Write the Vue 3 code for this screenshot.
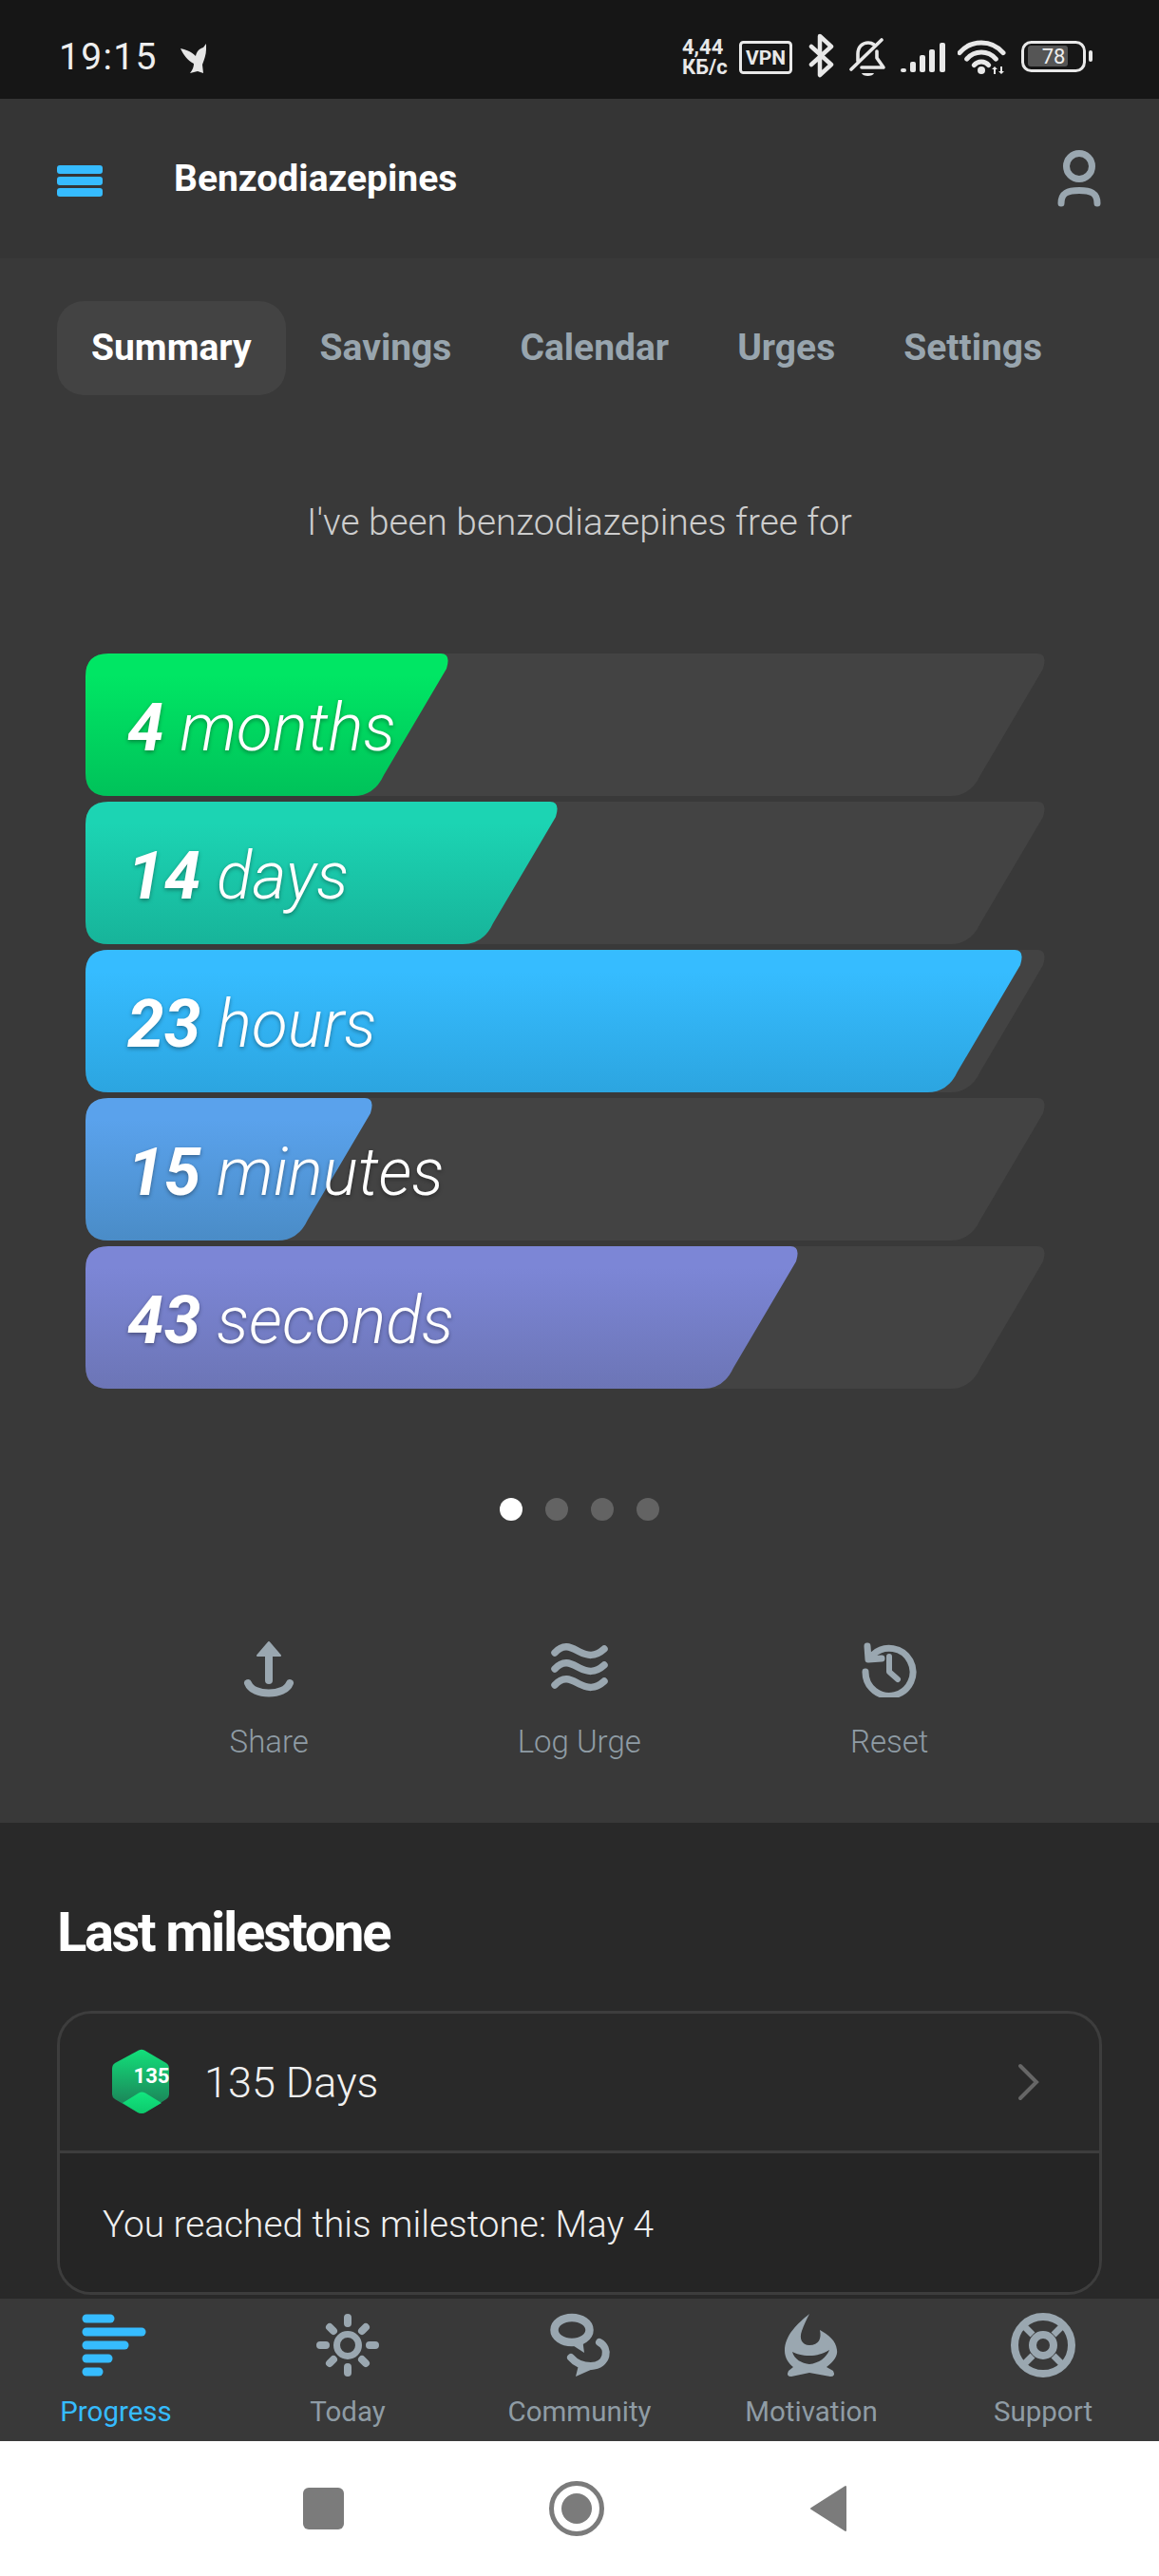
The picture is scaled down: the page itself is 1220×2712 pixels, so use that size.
<script setup>
const tabs = ['Summary', 'Savings', 'Calendar', 'Urges', 'Settings']
const bars = [
  { n: '4', u: 'months', r: 380, id: 'g0', a: '#00e664', b: '#00c25a' },
  { n: '14', u: 'days', r: 495, id: 'g1', a: '#1cd4b3', b: '#17b49a' },
  { n: '23', u: 'hours', r: 984, id: 'g2', a: '#36bcff', b: '#2ca5e0' },
  { n: '15', u: 'minutes', r: 300, id: 'g3', a: '#5aa2ec', b: '#4a8cc7' },
  { n: '43', u: 'seconds', r: 748, id: 'g4', a: '#7c86d6', b: '#6c75b6' }
]
const shape = (r) =>
  `M24 0H${r - 6}Q${r + 5} 0 ${r} 16L${r - 66} 128Q${r - 76} 150 ${r - 98} 150H24Q0 150 0 126V24Q0 0 24 0Z`
</script>

<template>
  <div class="app">
    <div class="status">
      <span class="time">19:15</span>
      <svg class="bird" width="34" height="40" viewBox="0 0 34 40"><path fill="#e6e6e6" d="M3 11C8 12 14 14 19 19C20 14 23 11 27 10L30 6L30 12C30 17 28 23 26 28L27 37L21 35L13 37C16 33 17 30 17 27C11 24 6 18 3 11Z"/></svg>
      <div class="status-right">
        <div class="speed"><span>4,44</span><span>КБ/с</span></div>
        <svg width="73" height="50" viewBox="0 0 73 50"><rect x="1.5" y="9.5" width="53" height="32" rx="3" fill="none" stroke="#e8e8e8" stroke-width="3"/><text x="28" y="33" text-anchor="middle" class="vpn">VPN</text></svg>
        <svg width="43" height="50" viewBox="0 0 43 50"><path d="M3 14L24 33L12 44V3L24 14L3 33" fill="none" stroke="#e8e8e8" stroke-width="4.5" stroke-linejoin="round" stroke-linecap="round"/></svg>
        <svg width="53" height="50" viewBox="0 0 53 50"><g fill="none" stroke="#e8e8e8" stroke-width="3.6" stroke-linecap="round" stroke-linejoin="round"><path d="M2 38L34 7"/><path d="M9 29V22C9 14 14 10 20 10C22 10 24 10.500 26 12"/><path d="M29 19V26L36 36H13"/></g><path d="M13 42H26C25 46 14 46 13 42Z" fill="#e8e8e8"/></svg>
        <svg width="61" height="50" viewBox="0 0 61 50"><g fill="#e8e8e8"><rect x="1" y="37" width="6" height="4" rx="2"/><rect x="11" y="30" width="6" height="11" rx="2"/><rect x="21" y="23" width="6" height="18" rx="2"/><rect x="31" y="17" width="6" height="24" rx="2"/><rect x="42" y="10" width="6" height="31" rx="2"/></g></svg>
        <svg width="67" height="50" viewBox="0 0 67 50"><g fill="none" stroke="#e8e8e8" stroke-width="5" stroke-linecap="round"><path d="M2 20.700A30 30 0 0 1 48 20.700"/><path d="M9.700 27.100A20 20 0 0 1 40.300 27.100"/><path d="M17.300 33.600A10 10 0 0 1 32.700 33.600"/></g><circle cx="25" cy="39" r="4" fill="#e8e8e8"/><path d="M39 35L42 38H40V43H38V38H36ZM45 35H47V40H49L46 43L43 40H45Z" fill="#e8e8e8"/></svg>
        <svg width="75" height="50" viewBox="0 0 75 50"><rect x="1.500" y="9.500" width="65" height="30" rx="9" fill="none" stroke="#e8e8e8" stroke-width="3"/><rect x="7" y="13" width="42" height="22" rx="3" fill="#555"/><text x="34" y="32" text-anchor="middle" class="batt">78</text><rect x="71" y="18" width="4" height="12" rx="2" fill="#e8e8e8"/></svg>
      </div>
    </div>

    <header class="header">
      <div class="burger"><i></i><i></i><i></i></div>
      <div class="title">Benzodiazepines</div>
      <svg class="profile" width="52" height="66" viewBox="0 0 52 66"><g fill="none" stroke="#9aa7b0" stroke-width="7" stroke-linecap="round"><circle cx="26" cy="20" r="13.500"/><path d="M7 59C7 48 14 45.500 26 45.500C38 45.500 45 48 45 59"/></g></svg>
    </header>

    <main class="main">
      <nav class="tabs">
        <span v-for="(t, i) in tabs" :key="t" class="tab" :class="{ active: i === 0 }">{{ t }}</span>
      </nav>
      <p class="lead">I've been benzodiazepines free for</p>
      <div class="bars">
        <div v-for="b in bars" :key="b.id" class="bar">
          <svg class="bar-bg" width="1040" height="150" viewBox="0 0 1040 150">
            <defs>
              <linearGradient :id="b.id" x1="0" y1="0" x2="0" y2="1">
                <stop offset="0.15" :stop-color="b.a" />
                <stop offset="1" :stop-color="b.b" />
              </linearGradient>
            </defs>
            <path :d="shape(1008)" fill="#434343" />
            <path :d="shape(b.r)" :fill="`url(#${b.id})`" />
          </svg>
          <span class="bar-text"><b>{{ b.n }}</b> {{ b.u }}</span>
        </div>
      </div>
      <div class="dots"><i class="on"></i><i></i><i></i><i></i></div>
      <div class="actions">
        <div class="action">
          <svg width="60" height="60" viewBox="0 0 60 60"><g fill="none" stroke="#9aa7b0" stroke-width="8" stroke-linecap="round"><path d="M30 14V42"/><path d="M8 45C13 59 47 59 52 45"/></g><path d="M30 2L42 16H18Z" fill="#9aa7b0" stroke="#9aa7b0" stroke-width="2" stroke-linejoin="round"/></svg>
          <span>Share</span>
        </div>
        <div class="action">
          <svg width="60" height="60" viewBox="0 0 60 60"><g fill="none" stroke="#9aa7b0" stroke-width="7.500" stroke-linecap="round"><path d="M4 13C14 2 22 8 30 12C38 16 46 18 56 9"/><path d="M4 30C14 19 22 25 30 29C38 33 46 35 56 26"/><path d="M4 47C14 36 22 42 30 46C38 50 46 52 56 43"/></g></svg>
          <span>Log Urge</span>
        </div>
        <div class="action">
          <svg width="60" height="60" viewBox="0 0 60 60"><g fill="none" stroke="#9aa7b0" stroke-width="7" stroke-linecap="round" stroke-linejoin="round"><path d="M13 15A25 25 0 1 1 5 33"/><path d="M7 6L8 20L22 19"/><path d="M30 17V33L39 41" stroke-width="6"/></g></svg>
          <span>Reset</span>
        </div>
      </div>
    </main>

    <section class="lower">
      <h2>Last milestone</h2>
      <div class="card">
        <div class="card-top">
          <svg class="badge" width="62" height="70" viewBox="0 0 62 70">
            <defs>
              <linearGradient id="bd" x1="0" y1="0" x2="0" y2="1"><stop offset="0" stop-color="#12e07a"/><stop offset="0.8" stop-color="#1b8a5b"/></linearGradient>
              <linearGradient id="bd2" x1="0" y1="0" x2="0" y2="1"><stop offset="0" stop-color="#12e67f"/><stop offset="1" stop-color="#0dc96c"/></linearGradient>
            </defs>
            <path d="M28 1.500Q31 0 34 1.500L57 15Q60 17 60 21V48Q60 51 57 53L35 67Q31 69 27 67L3 53Q0 51 0 48V21Q0 17 3 15Z" fill="url(#bd)"/>
            <path d="M28 46.500Q31 44.500 35 46.500L52 57L35 67Q31 69 27 67L11 57Z" fill="url(#bd2)"/>
            <text x="41.500" y="36" text-anchor="middle" class="badge-n">135</text>
          </svg>
          <span class="days">135 Days</span>
          <svg class="chev" width="24" height="40" viewBox="0 0 24 40"><path d="M3 3L20 20L3 37" fill="none" stroke="#666" stroke-width="4" stroke-linecap="round"/></svg>
        </div>
        <div class="card-bottom">You reached this milestone: May 4</div>
      </div>
    </section>

    <footer class="tabbar">
      <div class="item active">
        <svg width="100" height="86" viewBox="0 0 100 86"><g fill="#36bcff"><rect x="14.500" y="16.500" width="34" height="9" rx="4.500"/><rect x="14.500" y="30.500" width="67" height="9" rx="4.500"/><rect x="14.500" y="44.500" width="49" height="9" rx="4.500"/><rect x="14.500" y="58.500" width="32" height="9" rx="4.500"/><rect x="14.500" y="72.500" width="22" height="9" rx="4.500"/></g></svg>
        <span>Progress</span>
      </div>
      <div class="item">
        <svg width="100" height="86" viewBox="0 0 100 86"><circle cx="50" cy="49" r="11.500" fill="none" stroke="#9aa7b0" stroke-width="7"/><g stroke="#9aa7b0" stroke-width="8" stroke-linecap="round"><path d="M50 20V26M50 72V78M21 49H27M73 49H79M31 30L35 34M65 64L69 68M69 30L65 34M35 64L31 68"/></g></svg>
        <span>Today</span>
      </div>
      <div class="item">
        <svg width="100" height="86" viewBox="0 0 100 86"><ellipse cx="42" cy="33" rx="18.500" ry="13" fill="none" stroke="#9aa7b0" stroke-width="8.500"/><path d="M38 46L55 57L53 42Z" fill="#9aa7b0"/><path d="M71 46C82 52 80 70 62 71C52 71 46 68 41 62" fill="none" stroke="#9aa7b0" stroke-width="8" stroke-linecap="round"/><path d="M50 66L64 74L46 82Z" fill="#9aa7b0"/></svg>
        <span>Community</span>
      </div>
      <div class="item">
        <svg width="100" height="86" viewBox="0 0 100 86"><path transform="translate(16 10)" fill-rule="evenodd" fill="#9aa7b0" d="M32 6C20 16 6 28 6 45C6 52 10 58 15 62L10 66Q7 72 13 72L32 68L54 72Q60 72 57 66L50 62C58 56 62 50 61 44C60 34 52 28 43 23C45 32 42 39 32 39C24 39 21 32 24 24C26 18 29 12 32 6ZM14 46C16 54 24 58 32 59C42 58 50 52 53 44C46 48 40 50 32 50C24 50 18 48 14 46Z"/></svg>
        <span>Motivation</span>
      </div>
      <div class="item">
        <svg width="100" height="86" viewBox="0 0 100 86"><g fill="none" stroke="#9aa7b0"><circle cx="50" cy="49" r="30" stroke-width="8"/><circle cx="50" cy="49" r="11" stroke-width="8"/><path stroke-width="7" d="M39 38L29 28M61 38L71 28M39 60L29 70M61 60L71 70"/></g></svg>
        <span>Support</span>
      </div>
    </footer>

    <div class="sysnav">
      <div class="square"></div>
      <svg width="60" height="60" viewBox="0 0 60 60"><circle cx="30" cy="30" r="26.500" fill="none" stroke="#7b7b7b" stroke-width="5"/><circle cx="30" cy="30" r="16" fill="#7b7b7b"/></svg>
      <svg width="40" height="50" viewBox="0 0 40 50"><path d="M38 2V48L2 25Z" fill="#7b7b7b" stroke="#7b7b7b" stroke-width="2" stroke-linejoin="round"/></svg>
    </div>
  </div>
</template>

<style scoped>
.app { width: 1220px; height: 2712px; overflow: hidden; font-family: Roboto, "Liberation Sans", sans-serif; background: #393939; display: flex; flex-direction: column; }
.status { height: 104px; flex: none; background: #161616; display: flex; align-items: center; padding: 16px 70px 0 62px; box-sizing: border-box; color: #eee; }
.time { font-size: 39px; letter-spacing: 1.3px; line-height: 50px; }
.bird { margin-left: 21px; }
.status-right { margin-left: auto; display: flex; align-items: center; }
.speed { width: 58px; margin-left: -2px; margin-right: 2px; display: flex; flex-direction: column; font-size: 22px; font-weight: 700; line-height: 21px; color: #e8e8e8; }
.vpn { font: 700 21px Roboto, sans-serif; fill: #e8e8e8; }
.batt { font: 400 22px Roboto, sans-serif; fill: #eee; }
.header { height: 168px; flex: none; background: #353535; display: flex; align-items: center; padding: 0 58px 0 60px; box-sizing: border-box; }
.burger { width: 48px; display: flex; flex-direction: column; gap: 3px; margin-top: 4px; }
.burger i { display: block; height: 9px; border-radius: 3px; background: #36bcff; }
.title { margin-left: 75px; font-size: 39px; font-weight: 700; color: #fff; }
.profile { margin-left: auto; }
.main { height: 1647px; flex: none; background: #393939; padding-top: 45px; box-sizing: border-box; }
.tabs { display: flex; padding-left: 60px; height: 99px; align-items: center; }
.tab { font-size: 39px; font-weight: 700; color: #98a5ae; padding: 0 36px; line-height: 99px; }
.tab.active { color: #fff; background: #434343; border-radius: 28px; }
.lead { margin: 109px 0 0; text-align: center; font-size: 38.8px; font-weight: 300; color: #cdcdcd; line-height: 50px; }
.bars { margin-top: 113px; padding-left: 90px; display: flex; flex-direction: column; gap: 6px; }
.bar { position: relative; height: 150px; width: 1040px; }
.bar-bg { position: absolute; left: 0; top: 0; }
.bar-text { position: relative; display: block; padding-left: 44px; line-height: 158px; height: 150px; font-size: 69.4px; font-style: italic; font-weight: 300; color: #fff; text-shadow: 0 2px 4px rgba(0, 0, 0, 0.35); }
.bar-text b { font-weight: 700; }
.dots { margin-top: 115px; display: flex; justify-content: center; gap: 24px; }
.dots i { width: 24px; height: 24px; border-radius: 50%; background: #636363; display: block; }
.dots i.on { background: #fff; }
.actions { margin-top: 126px; padding-left: 120px; display: grid; grid-template-columns: repeat(3, 326.5px); }
.action { display: flex; flex-direction: column; align-items: center; gap: 27px; color: #8f9ca5; font-size: 33px; font-weight: 300; line-height: 40px; }
.lower { height: 501px; flex: none; background: #292929; padding: 80px 60px 0; box-sizing: border-box; }
.lower h2 { margin: 0; font-size: 58px; font-weight: 700; color: #fff; line-height: 70px; letter-spacing: -2.4px; }
.card { margin-top: 48px; height: 299px; box-sizing: border-box; border: 3px solid #3d3d3d; border-radius: 36px; overflow: hidden; display: flex; flex-direction: column; }
.card-top { height: 147px; flex: none; display: flex; align-items: center; padding: 0 62px 0 55px; box-sizing: border-box; border-bottom: 3px solid #3d3d3d; }
.badge-n { font: 700 22px Roboto, sans-serif; fill: #fff; }
.days { margin-left: 35px; font-size: 45px; font-weight: 300; color: #f0f0f0; }
.chev { margin-left: auto; }
.card-bottom { flex: 1; background: #252525; padding: 2px 0 0 45px; display: flex; align-items: center; font-size: 38.8px; font-weight: 300; color: #f0f0f0; }
.tabbar { height: 150px; flex: none; background: #393939; display: grid; grid-template-columns: repeat(5, 244px); }
.item { display: flex; flex-direction: column; align-items: center; font-size: 29.5px; color: #8f9ca5; }
.item span { line-height: 42px; margin-top: 12px; }
.item.active { color: #36bcff; }
.sysnav { height: 142px; flex: none; background: #fff; display: flex; align-items: center; padding-left: 319px; gap: 215px; }
.square { width: 43px; height: 44px; border-radius: 6px; background: #7b7b7b; }
</style>
